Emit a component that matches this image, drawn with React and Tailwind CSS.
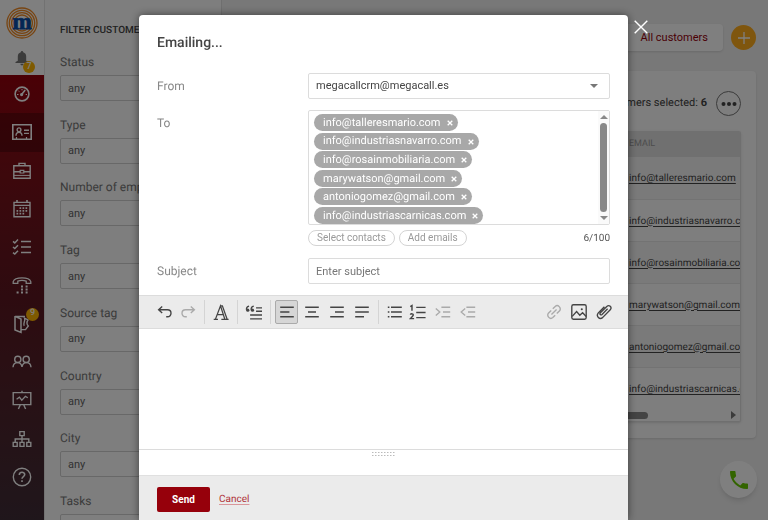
import React from "react";

const customers = [
  "info@talleresmario.com",
  "info@industriasnavarro.com",
  "info@rosainmobiliaria.com",
  "marywatson@gmail.com",
  "antoniogomez@gmail.com",
  "info@industriascarnicas.com",
];

const filters = ["Status", "Type", "Number of employees", "Tag", "Source tag", "Country", "City", "Tasks"];

function Icon({ children, className = "size-5", width = 1.5 }) {
  return (
    <svg viewBox="0 0 20 20" className={className} fill="none" stroke="currentColor" strokeWidth={width} strokeLinecap="butt" aria-hidden="true">
      {children}
    </svg>
  );
}

const nav = [
  {
    label: "Dashboard",
    icon: (
      <>
        <circle cx="10" cy="10" r="6.9" strokeWidth="1.6" />
        <circle cx="9.6" cy="10.6" r="1.6" fill="currentColor" stroke="none" />
        <path d="M9.6 10.6 13.2 6" strokeWidth="1.6" />
        <path d="M5 10.5h1.5M6.2 6.6l1 1M10 5v1.3M13.7 10.5H15" strokeWidth="1" />
      </>
    ),
  },
  {
    label: "Customers",
    icon: (
      <>
        <path d="M.8 2.8h18.4v14.4H.8z" strokeWidth="1.6" />
        <circle cx="7" cy="7.8" r="1.9" strokeWidth="1.4" />
        <path d="M4 13.8c0-2.4 1-3.4 3-3.4s3 1 3 3.4M12 8.2h5M12 11.4h5" strokeWidth="1.4" />
        <path d="M4.5 15v2M14.5 15v2" strokeWidth="1.2" />
      </>
    ),
  },
  {
    label: "Business",
    icon: (
      <>
        <path d="M1.8 4.8h16.4v12.4H1.8zM7 4.6V2.4h6v2.2M1.8 10.8h6.4M11.8 10.8h6.4" strokeWidth="1.4" />
        <path d="M8.2 9.4h3.6v2.6H8.2z" strokeWidth="1.2" />
        <path d="M2 14.4h16" strokeWidth="1" />
      </>
    ),
  },
  {
    label: "Calendar",
    icon: (
      <>
        <path d="M2 3.4h16v14.4H2zM2 6.4h16" strokeWidth="1.4" />
        <path d="M5 1v3M15 1v3" strokeWidth="1.6" />
        <path d="M7.5 9.2h8M4.5 11.8h11M4.5 14.6h8" strokeWidth="1.7" strokeDasharray="1.7 1.3" />
      </>
    ),
  },
  {
    label: "Tasks",
    icon: (
      <path d="M9 4.4h10M9 10h10M9 15.6h10M1 4.4l1.8 1.5L6 2.6M1 10l1.8 1.5L6 8.2M1 15.6l1.8 1.5L6 13.8" strokeWidth="1.5" />
    ),
  },
  {
    label: "Calls",
    icon: (
      <>
        <path d="M1.2 8.4V6.6C3 1.7 17 1.7 18.8 6.6v1.8h-4.6V6.2c-2.4-.9-6-.9-8.4 0v2.2z" strokeWidth="1.3" />
        <path d="M9 11.5h2M13.6 11.5h2M9 14.5h2M13.6 14.5h2M4.6 17.5h2M9 17.5h2M13.6 17.5h2" strokeWidth="1.9" />
      </>
    ),
  },
  {
    label: "Products",
    badge: "9",
    icon: (
      <>
        <path d="M3 2.4h10M3 2v14l6 2.4V5L3 2.4" strokeWidth="1.5" />
        <path d="M9 15.6h4.5l2.8-3.6c-1.8-2-1.3-4.6-.3-6L12.6 4.2c1 3-1.8 5-.4 7.6" strokeWidth="1.4" />
      </>
    ),
  },
  {
    label: "Teams",
    icon: (
      <>
        <circle cx="5.8" cy="7.4" r="3.1" strokeWidth="1.4" />
        <circle cx="14.2" cy="7.4" r="3.1" strokeWidth="1.4" />
        <path d="M1 15.2c.2-3 1.8-4.6 4.6-4.6s4 1.8 4.4 4.4c.4-2.6 1.6-4.4 4.4-4.4s4.4 1.6 4.6 4.6" strokeWidth="1.4" />
      </>
    ),
  },
  {
    label: "Reports",
    icon: (
      <>
        <path d="M1.2 2.6h17.6v12H1.2zM10 .8v1.8M8.2 15l-1.8 4M11.8 15l1.8 4" strokeWidth="1.4" />
        <path d="m4.6 9.2 2.8-2 2.4 3 3.6-3.8 2.4 1.4" strokeWidth="1.3" />
      </>
    ),
  },
  {
    label: "Structure",
    icon: (
      <path d="M7.8 2.6h4.4v4H7.8zM1.2 13.4h4v4h-4zM8 13.4h4v4H8zM14.8 13.4h4v4h-4zM10 6.6v6.8M3.2 13.4V10h13.6v3.4" strokeWidth="1.4" />
    ),
  },
  {
    label: "Help",
    icon: (
      <>
        <circle cx="10" cy="10" r="8.7" strokeWidth="1.4" />
        <path d="M7.3 8c0-3.6 5.4-3.4 5.4-.4 0 2-2.7 2-2.7 4.2M10 13.2v1.8" strokeWidth="1.6" />
      </>
    ),
  },
];

function Sidebar() {
  return (
    <aside className="flex w-[45px] shrink-0 flex-col border-r border-[#e4e4e4] bg-white">
      <div className="flex h-[75px] flex-col items-center gap-3 pt-[7px]">
        <a href="#home" aria-label="Home">
          <svg viewBox="0 0 32 32" className="size-8" fill="none" stroke="#f08a24" strokeWidth="1.3">
            <circle cx="16" cy="16" r="15" />
            <circle cx="16" cy="16" r="12.7" />
            <circle cx="16" cy="16" r="10.4" />
            <circle cx="16" cy="16" r="8" />
            <text x="16" y="21.5" textAnchor="middle" fill="#0a4da8" stroke="#0a4da8" strokeWidth="0.8" fontFamily="Liberation Serif" fontWeight="700" fontSize="23">m</text>
          </svg>
        </a>
        <button className="relative" aria-label="Notifications">
          <svg viewBox="0 0 14 16" className="h-4 w-3.5 text-[#777]" fill="currentColor" aria-hidden="true">
            <path d="M7 0c.8 0 1.2.6 1.2 1.3C10.3 1.9 11.2 3.5 11.2 5.6v4.2l2.3 1.2v1H.5v-1l2.3-1.2V5.6c0-2.1.9-3.7 3-4.3C5.8.6 6.2 0 7 0zM5.4 12.8h3.2c0 2.2-3.2 2.2-3.2 0z" />
          </svg>
          <span className="absolute left-2 top-2.5 flex size-3 items-center justify-center rounded-full bg-[#ffb400] text-[9px] font-medium text-white">7</span>
        </button>
      </div>
      <nav className="flex flex-1 flex-col bg-linear-to-b from-[#94000b] via-[#5c1620] to-[#3f2c37] pb-6">
        {nav.map((item, i) => (
          <a
            key={item.label}
            href="#nav"
            aria-label={item.label}
            className={`flex flex-1 items-center justify-center text-white ${i === 1 ? "bg-black/25" : ""}`}
          >
            <span className="relative">
              <Icon>{item.icon}</Icon>
              {item.badge && (
                <span className="absolute left-3.5 -top-1.5 flex size-[13px] items-center justify-center rounded-full bg-[#ffb400] text-[9px] font-medium text-white">
                  {item.badge}
                </span>
              )}
            </span>
          </a>
        ))}
      </nav>
    </aside>
  );
}

function FilterPanel() {
  return (
    <section className="w-[177px] shrink-0 border-r border-[#dedede] bg-[#fcfcfc] px-[15px] pt-[22px]">
      <h2 className="whitespace-nowrap text-[10px] leading-[17px] font-medium text-[#444]">FILTER CUSTOMERS</h2>
      <div className="mt-[15px] flex h-[486px] flex-col justify-between">
        {filters.map((name) => (
          <label key={name} className="block text-[12px] leading-4 text-[#777]">
            {name}
            <select className="mt-[5px] block h-[26px] w-full appearance-none rounded-xs border border-[#d0d0d0] bg-white px-[7px] pt-px text-[11px] text-[#666]">
              <option>any</option>
            </select>
          </label>
        ))}
      </div>
    </section>
  );
}

function CustomersPage() {
  return (
    <main className="min-w-0 flex-1 bg-[#f1f1f1] px-3 pt-6">
      <div className="flex h-[27px] items-center justify-end gap-2">
        <button className="h-[27px] w-[120px] rounded-sm bg-white pt-0.5 pr-[15px] text-right text-[11px] text-[#96000b] shadow-sm">All customers</button>
        <button aria-label="Add customer" className="flex size-[25px] items-center justify-center rounded-full bg-[#ffac1c] text-white">
          <Icon className="size-4" width={1.6}>
            <path d="M10 2.5v15M2.5 10h15" />
          </Icon>
        </button>
      </div>
      <div className="mt-5 rounded-sm bg-[#fcfcfc] px-[15px] pt-5 pb-4 shadow-sm">
        <div className="flex items-center justify-end gap-[9px] text-[11px] text-[#444]">
          <p>
            Customers selected: <b className="font-bold">6</b>
          </p>
          <button aria-label="More actions" className="flex size-[25px] items-center justify-center rounded-full border border-[#777] text-[#444]">
            <svg viewBox="0 0 16 4" className="h-1 w-4" fill="currentColor" aria-hidden="true">
              <circle cx="2.5" cy="2" r="2" />
              <circle cx="8" cy="2" r="2" />
              <circle cx="13.5" cy="2" r="2" />
            </svg>
          </button>
        </div>
        <div className="mt-[15px] overflow-hidden rounded-xs border border-t-0 border-[#dedede] shadow-sm">
          <table className="w-full table-fixed border-collapse text-left">
            <thead>
              <tr className="h-[26px] bg-[#e0e0e0] text-[9px] text-[#999]">
                <td />
                <th scope="col" className="w-[111px] p-0 pt-0.5 font-normal">EMAIL</th>
              </tr>
            </thead>
            <tbody>
              {customers.map((mail) => (
                <tr key={mail} className="h-[42px] border-b border-[#e6e6e6] text-[10px] odd:bg-[#f5f5f5] last:border-0">
                  <td />
                  <td className="overflow-hidden p-0 pt-0.5 whitespace-nowrap">
                    <a href="#customer" className="text-[#444] underline underline-offset-2">{mail}</a>
                  </td>
                </tr>
              ))}
            </tbody>
          </table>
          <div className="flex h-3 items-center justify-between pr-1">
            <span className="ml-3 h-[7px] w-[386px] rounded-full bg-[#888]" />
            <svg viewBox="0 0 5 8" className="h-2 w-[5px]" fill="#777" aria-hidden="true">
              <path d="m0 0 5 4-5 4z" />
            </svg>
          </div>
        </div>
      </div>
    </main>
  );
}

function Tool({ label, active, muted, large, children }) {
  return (
    <button
      aria-label={label}
      className={`flex h-6 w-[23px] items-center justify-center rounded-xs border ${active ? "border-[#aaa] bg-[#d6d6d6]" : "border-transparent"} ${muted ? "text-[#aaa]" : "text-[#444]"}`}
    >
      <Icon className={large ? "size-[17px] shrink-0" : "size-4"} width={1.7}>{children}</Icon>
    </button>
  );
}

function Divider() {
  return <span className="mr-1 ml-[5px] h-6 w-px bg-[#d4d4d4]" />;
}

function Toolbar() {
  return (
    <div role="toolbar" aria-label="Formatting" className="flex h-[34px] items-center border-y border-[#dcdcdc] bg-[#ebebeb] pr-[13px] pl-3.5">
      <Tool label="Undo">
        <path d="M6.5 3 2 7.2l4.5 4.2M2 7.2h11c6 0 6 8.8 0 8.8h-1.5" />
      </Tool>
      <Tool label="Redo" muted>
        <path d="M13.5 3 18 7.2l-4.5 4.2M18 7.2H7c-6 0-6 8.8 0 8.8h1.5" />
      </Tool>
      <Divider />
      <Tool label="Font" large>
        <path d="M2 18h5M11 18h8.500M4.200 17.500 10 2.200l5 15.500M10 2.200h2.200l5.500 15.500M6.400 12.500h6.800" strokeWidth="1.5" />
      </Tool>
      <Divider />
      <Tool label="Quote" large>
        <path d="M13 4.500h7M13 8.500h7M6 13h14M6 17.500h14" strokeWidth="1.6" />
        <path d="M4.800 2.500C2.500 3 1.500 5 1.800 7M10.300 2.500C8 3 7 5 7.300 7" strokeWidth="1.6" />
        <circle cx="3.300" cy="7.300" r="1.9" fill="currentColor" stroke="none" />
        <circle cx="8.800" cy="7.300" r="1.9" fill="currentColor" stroke="none" />
      </Tool>
      <Divider />
      <Tool label="Align left" active>
        <path d="M1.5 4h17M1.5 10H13M1.5 16h17" />
      </Tool>
      <span className="w-0.5" />
      <Tool label="Align center">
        <path d="M1.5 4h17M5 10h10M1.5 16h17" />
      </Tool>
      <span className="w-0.5" />
      <Tool label="Align right">
        <path d="M1.5 4h17M7.5 10h11M1.5 16h17" />
      </Tool>
      <span className="w-0.5" />
      <Tool label="Justify">
        <path d="M1.5 4h17M1.5 10h17M1.5 16h11" />
      </Tool>
      <Divider />
      <Tool label="Bulleted list">
        <path d="M5 4h13.500M5 10h13.500M5 16h13.500M1 4h2M1 10h2M1 16h2" />
      </Tool>
      <Tool label="Numbered list" large>
        <path d="M8.5 4h11M8.5 10h11M8.5 16h11" />
        <path d="M1.500 3l2-1.200V8M1.500 12.500c1-1.500 3.800-1.200 3.500.7-.2 1.300-2.400 2.500-3.500 4H6" strokeWidth="1.7" />
      </Tool>
      <span className="w-0.5" />
      <Tool label="Indent" muted>
        <path d="M8 4h11M10 10h9M8 16h11M1 5.500 6 10l-5 4.500" />
      </Tool>
      <span className="w-0.5" />
      <Tool label="Outdent" muted>
        <path d="M8 4h11M10 10h9M8 16h11M6.500 5.500 1.500 10l5 4.500" />
      </Tool>
      <span className="flex-1" />
      <Tool label="Link" muted>
        <path d="m6.800 13.200 6.400-6.400M8.500 6l3-3c3.500-3 8 2 5.500 5.500l-3.500 3.500M11.500 14l-3 3c-3.500 3-8-2-5.500-5.500L6.500 8" />
      </Tool>
      <span className="w-0.5" />
      <Tool label="Image">
        <rect x="1" y="1" width="18" height="18" rx="2" />
        <path d="m1.500 15.500 5.500-6 4 4.500 3.500-3 4.500 4.500" />
        <circle cx="13.500" cy="6.500" r="1.3" fill="currentColor" stroke="none" />
      </Tool>
      <span className="w-0.5" />
      <Tool label="Attachment">
        <path d="m14.500 6-7 7c-1.500 1.400-3.500-.4-2-2l8-8c3-2.600 7 1 4.300 4.300l-9.300 9.400c-4 3.400-9-1.200-5.600-5.600l7.600-7.600" />
      </Tool>
    </div>
  );
}

function EmailDialog() {
  return (
    <div role="dialog" aria-modal="true" aria-labelledby="email-title" className="relative flex w-full max-w-[489px] flex-col rounded-t-sm bg-white text-[11px] text-[#444] shadow-[0_0_8px_rgba(0,0,0,0.5)]">
      <button aria-label="Close" className="absolute top-[5px] left-full ml-1.5 text-white">
        <Icon className="size-3.5" width={2}>
          <path d="m1 1 18 18M19 1 1 19" />
        </Icon>
      </button>
      <div className="grid grid-cols-[151px_1fr] px-[18px] pt-[18px] pb-[11px]">
        <h1 id="email-title" className="col-span-2 mb-5 text-[14px] leading-5 font-medium">Emailing...</h1>

        <label htmlFor="from" className="text-[12px] leading-[26px] text-[#888]">From</label>
        <div className="relative">
          <select id="from" className="h-[26px] w-full appearance-none rounded-xs border border-[#dcdcdc] bg-white px-[7px]">
            <option>megacallcrm@megacall.es</option>
          </select>
          <svg viewBox="0 0 8 4" className="pointer-events-none absolute top-[11px] right-3 h-1 w-2" fill="#777" aria-hidden="true">
            <path d="M0 0h8L4 4z" />
          </svg>
        </div>

        <span className="mt-[11px] text-[12px] leading-[26px] text-[#888]">To</span>
        <div className="mt-[11px]">
          <div className="flex h-[115px] justify-between rounded-xs border border-[#dcdcdc] pl-[5px]">
            <ul className="flex flex-col items-start justify-between pt-[3px]">
              {customers.map((mail) => (
                <li key={mail} className="flex h-[17px] items-center gap-1.5 rounded-full bg-[#a8a8a8] pt-px pr-[5px] pl-[9px] text-white">
                  {mail}
                  <button aria-label={`Remove ${mail}`}>
                    <svg viewBox="0 0 6 6" className="size-1.5" stroke="currentColor" strokeWidth="1.3" aria-hidden="true">
                      <path d="m.7.7 4.6 4.6M5.3.7.7 5.3" />
                    </svg>
                  </button>
                </li>
              ))}
            </ul>
            <div className="flex w-[11px] flex-col items-center justify-between bg-[#fafafa] py-1" aria-hidden="true">
              <svg viewBox="0 0 8 4" className="h-1 w-2" fill="#888"><path d="M0 4h8L4 0z" /></svg>
              <span className="my-1 w-[7px] flex-1 rounded-full bg-[#888]" />
              <svg viewBox="0 0 8 4" className="h-1 w-2" fill="#888"><path d="M0 0h8L4 4z" /></svg>
            </div>
          </div>
          <div className="mt-[5px] flex h-4 items-center gap-1 text-[10px]">
            <button className="h-4 rounded-full border border-[#d4d4d4] px-2 leading-[14px] text-[#999]">Select contacts</button>
            <button className="h-4 rounded-full border border-[#d4d4d4] px-2 leading-[14px] text-[#999]">Add emails</button>
            <span className="ml-auto text-[#555]">6/100</span>
          </div>
        </div>

        <label htmlFor="subject" className="mt-3 text-[12px] leading-[26px] text-[#888]">Subject</label>
        <input id="subject" placeholder="Enter subject" className="mt-3 h-[26px] rounded-xs border border-[#dcdcdc] px-[7px] placeholder:text-[#777]" />
      </div>
      <Toolbar />
      <textarea aria-label="Message" className="block h-[121px] w-full resize-none border-b border-[#dcdcdc]" />
      <div className="flex h-[25px] justify-center pt-0.5">
        <svg viewBox="0 0 24 4" className="h-1 w-6" stroke="#bbb" strokeWidth="1" strokeDasharray="1.5 1.5" aria-hidden="true">
          <path d="M0 .5h24M0 3.5h24" />
        </svg>
      </div>
      <div className="flex flex-1 items-start gap-[9px] border-t border-[#e0e0e0] bg-[#ebebeb] px-[18px] pt-[11px]">
        <button className="h-[25px] w-[53px] rounded-xs bg-[#96000b] text-[10px] font-bold text-white">Send</button>
        <a href="#cancel" className="text-[10px] leading-[25px] text-[#b0323a] underline decoration-[#d9979b] underline-offset-2">Cancel</a>
      </div>
    </div>
  );
}

export default function App() {
  return (
    <div className="relative flex h-screen overflow-hidden font-[Roboto,sans-serif] [text-rendering:geometricPrecision]">
      <Sidebar />
      <FilterPanel />
      <CustomersPage />
      <button aria-label="Call" className="fixed right-[11px] bottom-[22px] flex size-[37px] items-center justify-center rounded-full bg-white shadow-md">
        <svg viewBox="0 0 18 18" className="size-[18px]" fill="#66c800" aria-hidden="true">
          <path d="M3.6 7.8c1.4 2.8 3.8 5.1 6.6 6.6l2.2-2.2c.3-.3.7-.4 1-.2 1.100.4 2.300.6 3.600.6.600 0 1 .4 1 1V17c0 .6-.4 1-1 1C7.600 18 0 10.400 0 1c0-.6.4-1 1-1h3.500c.6 0 1 .4 1 1 0 1.300.2 2.500.6 3.600.1.300 0 .7-.2 1L3.600 7.800z" />
        </svg>
      </button>
      <div className="fixed inset-0 flex justify-center bg-black/50 pt-[15px] pr-px">
        <EmailDialog />
      </div>
    </div>
  );
}
